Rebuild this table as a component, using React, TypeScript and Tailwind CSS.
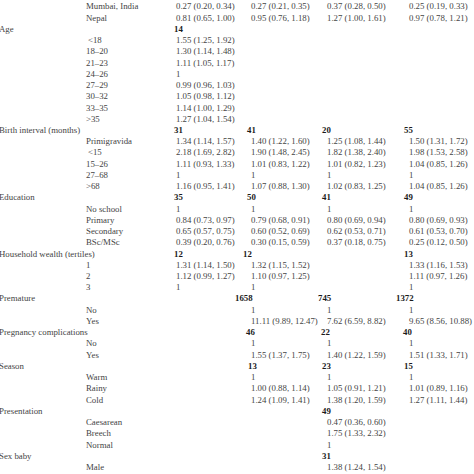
import React from "react";

type Cell = string | { t: string; cls: string };

type Row = {
  label?: string;
  sub?: string;
  subCls?: string;
  bold?: boolean;
  cells: Cell[];
};

const rows: Row[] = [
  {
    sub: "Mumbai, India",
    cells: [
      { t: "0.27 (0.20, 0.34)", cls: "pl-[0px]" },
      "0.27 (0.21, 0.35)",
      "0.37 (0.28, 0.50)",
      "0.25 (0.19, 0.33)",
    ],
  },
  {
    sub: "Nepal",
    cells: [
      { t: "0.81 (0.65, 1.00)", cls: "pl-[0px]" },
      "0.95 (0.76, 1.18)",
      "1.27 (1.00, 1.61)",
      "0.97 (0.78, 1.21)",
    ],
  },
  { label: "Age", bold: true, cells: ["14", "", "", ""] },
  { sub: "<18", subCls: "pl-[2px]", cells: ["1.55 (1.25, 1.92)", "", "", ""] },
  { sub: "18–20", cells: ["1.30 (1.14, 1.48)", "", "", ""] },
  { sub: "21–23", cells: ["1.11 (1.05, 1.17)", "", "", ""] },
  { sub: "24–26", cells: ["1", "", "", ""] },
  { sub: "27–29", cells: ["0.99 (0.96, 1.03)", "", "", ""] },
  { sub: "30–32", cells: ["1.05 (0.98, 1.12)", "", "", ""] },
  { sub: "33–35", cells: ["1.14 (1.00, 1.29)", "", "", ""] },
  { sub: ">35", cells: ["1.27 (1.04, 1.54)", "", "", ""] },
  { label: "Birth interval (months)", bold: true, cells: ["31", "41", "20", "55"] },
  {
    sub: "Primigravida",
    cells: ["1.34 (1.14, 1.57)", "1.40 (1.22, 1.60)", "1.25 (1.08, 1.44)", "1.50 (1.31, 1.72)"],
  },
  {
    sub: "<15",
    subCls: "pl-[2px]",
    cells: ["2.18 (1.69, 2.82)", "1.90 (1.48, 2.45)", "1.82 (1.38, 2.40)", "1.98 (1.53, 2.58)"],
  },
  {
    sub: "15–26",
    cells: ["1.11 (0.93, 1.33)", "1.01 (0.83, 1.22)", "1.01 (0.82, 1.23)", "1.04 (0.85, 1.26)"],
  },
  { sub: "27–68", cells: ["1", "1", "1", "1"] },
  {
    sub: ">68",
    cells: ["1.16 (0.95, 1.41)", "1.07 (0.88, 1.30)", "1.02 (0.83, 1.25)", "1.04 (0.85, 1.26)"],
  },
  { label: "Education", bold: true, cells: ["35", "50", "41", "49"] },
  { sub: "No school", cells: ["1", "1", "1", "1"] },
  {
    sub: "Primary",
    cells: ["0.84 (0.73, 0.97)", "0.79 (0.68, 0.91)", "0.80 (0.69, 0.94)", "0.80 (0.69, 0.93)"],
  },
  {
    sub: "Secondary",
    cells: ["0.65 (0.57, 0.75)", "0.60 (0.52, 0.69)", "0.62 (0.53, 0.71)", "0.61 (0.53, 0.70)"],
  },
  {
    sub: "BSc/MSc",
    cells: ["0.39 (0.20, 0.76)", "0.30 (0.15, 0.59)", "0.37 (0.18, 0.75)", "0.25 (0.12, 0.50)"],
  },
  {
    label: "Household wealth (tertiles)",
    bold: true,
    cells: ["12", { t: "12", cls: "-ml-[4px]" }, "", "13"],
  },
  { sub: "1", cells: ["1.31 (1.14, 1.50)", "1.32 (1.15, 1.52)", "", "1.33 (1.16, 1.53)"] },
  { sub: "2", cells: ["1.12 (0.99, 1.27)", "1.10 (0.97, 1.25)", "", "1.11 (0.97, 1.26)"] },
  { sub: "3", cells: ["1", "1", "", "1"] },
  {
    label: "Premature",
    bold: true,
    cells: ["", { t: "1658", cls: "-ml-[12px]" }, { t: "745", cls: "-ml-[4px]" }, { t: "1372", cls: "-ml-[8px]" }],
  },
  { sub: "No", cells: ["", "1", "1", "1"] },
  {
    sub: "Yes",
    cells: ["", { t: "11.11 (9.89, 12.47)", cls: "pl-[0px]" }, "7.62 (6.59, 8.82)", "9.65 (8.56, 10.88)"],
  },
  {
    label: "Pregnancy complications",
    bold: true,
    cells: ["", { t: "46", cls: "-ml-[1px]" }, { t: "22", cls: "-ml-[1px]" }, { t: "40", cls: "-ml-[1px]" }],
  },
  { sub: "No", cells: ["", "1", "1", "1"] },
  { sub: "Yes", cells: ["", "1.55 (1.37, 1.75)", "1.40 (1.22, 1.59)", "1.51 (1.33, 1.71)"] },
  { label: "Season", bold: true, cells: ["", { t: "13", cls: "ml-[1px]" }, "23", "15"] },
  { sub: "Warm", cells: ["", "1", "1", "1"] },
  { sub: "Rainy", cells: ["", "1.00 (0.88, 1.14)", "1.05 (0.91, 1.21)", "1.01 (0.89, 1.16)"] },
  { sub: "Cold", cells: ["", "1.24 (1.09, 1.41)", "1.38 (1.20, 1.59)", "1.27 (1.11, 1.44)"] },
  { label: "Presentation", bold: true, cells: ["", "", "49", ""] },
  { sub: "Caesarean", cells: ["", "", "0.47 (0.36, 0.60)", ""] },
  { sub: "Breech", cells: ["", "", "1.75 (1.33, 2.32)", ""] },
  { sub: "Normal", cells: ["", "", "1", ""] },
  { label: "Sex baby", bold: true, cells: ["", "", "31", ""] },
  { sub: "Male", cells: ["", "", "1.38 (1.24, 1.54)", ""] },
];

// value indent per data column (bold counts sit flush with the column start)
const valuePad = ["pl-[2px]", "pl-[4px]", "pl-[5px]", "pl-[5px]"];

function DataCell({ cell, bold, col }: { cell: Cell; bold?: boolean; col: number }) {
  const text = typeof cell === "string" ? cell : cell.t;
  const extra = typeof cell === "string" ? "" : cell.cls;
  const pad = bold ? "" : valuePad[col];
  return (
    <div className={`whitespace-nowrap ${pad} ${extra} ${bold ? "font-bold text-[#1a1a1a]" : ""}`}>
      {text}
    </div>
  );
}

export default function App() {
  return (
    <div
      className="h-[474px] w-[474px] overflow-hidden bg-white pt-[1.4px] text-[8.8px] text-[#444]"
      style={{ fontFamily: '"Liberation Serif", "Times New Roman", serif' }}
    >
      {rows.map((row, i) => (
        <div
          key={i}
          className="grid h-[11.24px] grid-cols-[86px_88px_73px_75px_82px_70px] items-center leading-[11.24px]"
        >
          <div className="-ml-[1px] whitespace-nowrap">{row.label ?? ""}</div>
          <div className={`whitespace-nowrap ${row.subCls ?? ""}`}>{row.sub ?? ""}</div>
          {row.cells.map((c, j) => (
            <DataCell key={j} cell={c} bold={row.bold} col={j} />
          ))}
        </div>
      ))}
    </div>
  );
}
